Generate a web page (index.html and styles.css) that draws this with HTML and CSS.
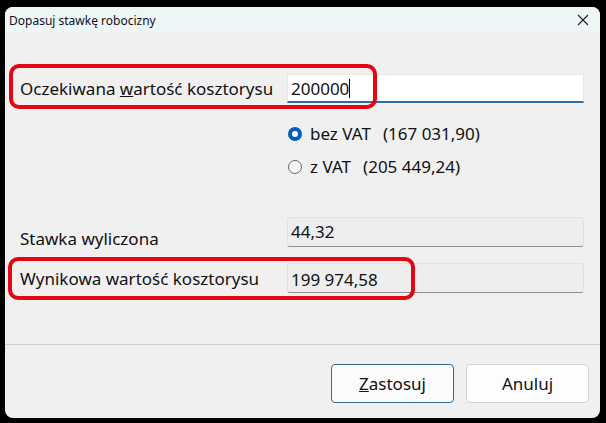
FILE: index.html
```html
<!DOCTYPE html>
<html lang="pl">

<head>
	<meta charset="UTF-8">
	<title>Dopasuj stawkę robocizny</title>
	<link rel="stylesheet" href="styles.css">
</head>

<body>
	<div class="dialog">
		<div class="titlebar">
			<span class="title">Dopasuj stawkę robocizny</span>
			<svg class="close" width="12" height="12" viewBox="0 0 12 12">
				<path d="M1 1 L11 11 M11 1 L1 11" stroke="#222" stroke-width="1.2" fill="none" />
			</svg>
		</div>

		<div class="content">
			<div class="row row-main">
				<label class="label" for="expected">Oczekiwana <u>w</u>artość kosztorysu</label>
				<div class="input" id="expected"><span>200000</span><span class="caret"></span></div>
			</div>

			<div class="radios">
				<div class="radio checked"><span class="dot"></span>bez VAT<span class="amount">(167 031,90)</span></div>
				<div class="radio"><span class="dot"></span>z VAT<span class="amount">(205 449,24)</span></div>
			</div>

			<div class="row row-rate">
				<span class="label">Stawka wyliczona</span>
				<div class="field">44,32</div>
			</div>

			<div class="row row-result">
				<span class="label">Wynikowa wartość kosztorysu</span>
				<div class="field">199 974,58</div>
			</div>

			<div class="mark mark-top"></div>
			<div class="mark mark-bottom"></div>
		</div>

		<div class="footer">
			<button class="btn btn-default"><u>Z</u>astosuj</button>
			<button class="btn">Anuluj</button>
		</div>
	</div>
</body>

</html>
```

FILE: styles.css
```css
body {
	margin: 0;
	padding: 0;
	background-color: #000;
	font-family: "Noto Sans", "Open Sans", sans-serif;
	color: #111;
	height: 423px;
	overflow: hidden;
}

.dialog {
	margin: 7px 6px 0 5px;
	width: 595px;
	height: 411px;
	border-radius: 8px;
	background-color: #f0f0f0;
	overflow: hidden;
	display: flex;
	flex-direction: column;
}

.titlebar {
	height: 26px;
	background-color: #eef5f7;
	display: flex;
	align-items: center;
	justify-content: space-between;
	padding: 0 11px 0 4px;
}

.title {
	font-size: 12px;
	color: #111;
}

.content {
	position: relative;
	height: 270px;
	padding: 41px 0 0 15px;
	border-bottom: 1px solid #cfcfcf;
}

.row {
	display: flex;
	height: 30px;
}

.row-main {
	height: 29px;
	align-items: center;
}

.label {
	width: 267px;
	font-size: 17px;
}

.input {
	box-sizing: border-box;
	width: 297px;
	height: 29px;
	background-color: #fff;
	border: 1px solid #e6e6e6;
	border-bottom: 2px solid #2a6fa8;
	display: flex;
	align-items: center;
	padding-left: 3px;
	font-size: 17px;
}

.caret {
	width: 1px;
	height: 19px;
	background-color: #000;
}

.radios {
	margin: 14px 0 0 267px;
}

.radio {
	height: 33px;
	display: flex;
	align-items: center;
	gap: 8px;
	font-size: 17px;
}

.amount {
	margin-left: 4px;
}

.dot {
	box-sizing: border-box;
	width: 14px;
	height: 14px;
	border-radius: 50%;
	border: 1px solid #666;
	background-color: #f6f6f6;
	margin-left: 1px;
}

.checked .dot {
	border: 4px solid #005fb8;
	background-color: #fff;
}

.row-rate {
	margin-top: 34px;
	align-items: flex-end;
}

.row-rate .label {
	margin-bottom: -3px;
}

.row-result {
	margin-top: 16px;
	align-items: center;
}

.field {
	box-sizing: border-box;
	width: 297px;
	height: 30px;
	background-color: #eeeeee;
	border: 1px solid #e2e2e2;
	border-bottom-color: #8f8f8f;
	border-radius: 3px;
	padding: 2px 3px 0;
	font-size: 17px;
	display: flex;
	align-items: center;
}

.row-rate .field {
	align-items: flex-start;
}

.mark {
	position: absolute;
	border: 4px solid #e30613;
	border-radius: 10px;
	box-sizing: border-box;
}

.mark-top {
	left: 4px;
	top: 31px;
	width: 368px;
	height: 45px;
}

.mark-bottom {
	left: 3px;
	top: 224px;
	width: 407px;
	height: 43px;
}

.footer {
	flex: 1;
	display: flex;
	justify-content: flex-end;
	align-items: flex-start;
	gap: 12px;
	padding: 19px 11px 0 0;
}

.btn {
	width: 123px;
	height: 39px;
	font-family: inherit;
	font-size: 17px;
	color: #111;
	background-color: #fdfdfd;
	border: 1px solid #d3d3d3;
	border-radius: 4px;
	padding: 0;
}

.btn-default {
	border: 1px solid #2f6a9c;
	background-color: #fbfbfb;
}
```
